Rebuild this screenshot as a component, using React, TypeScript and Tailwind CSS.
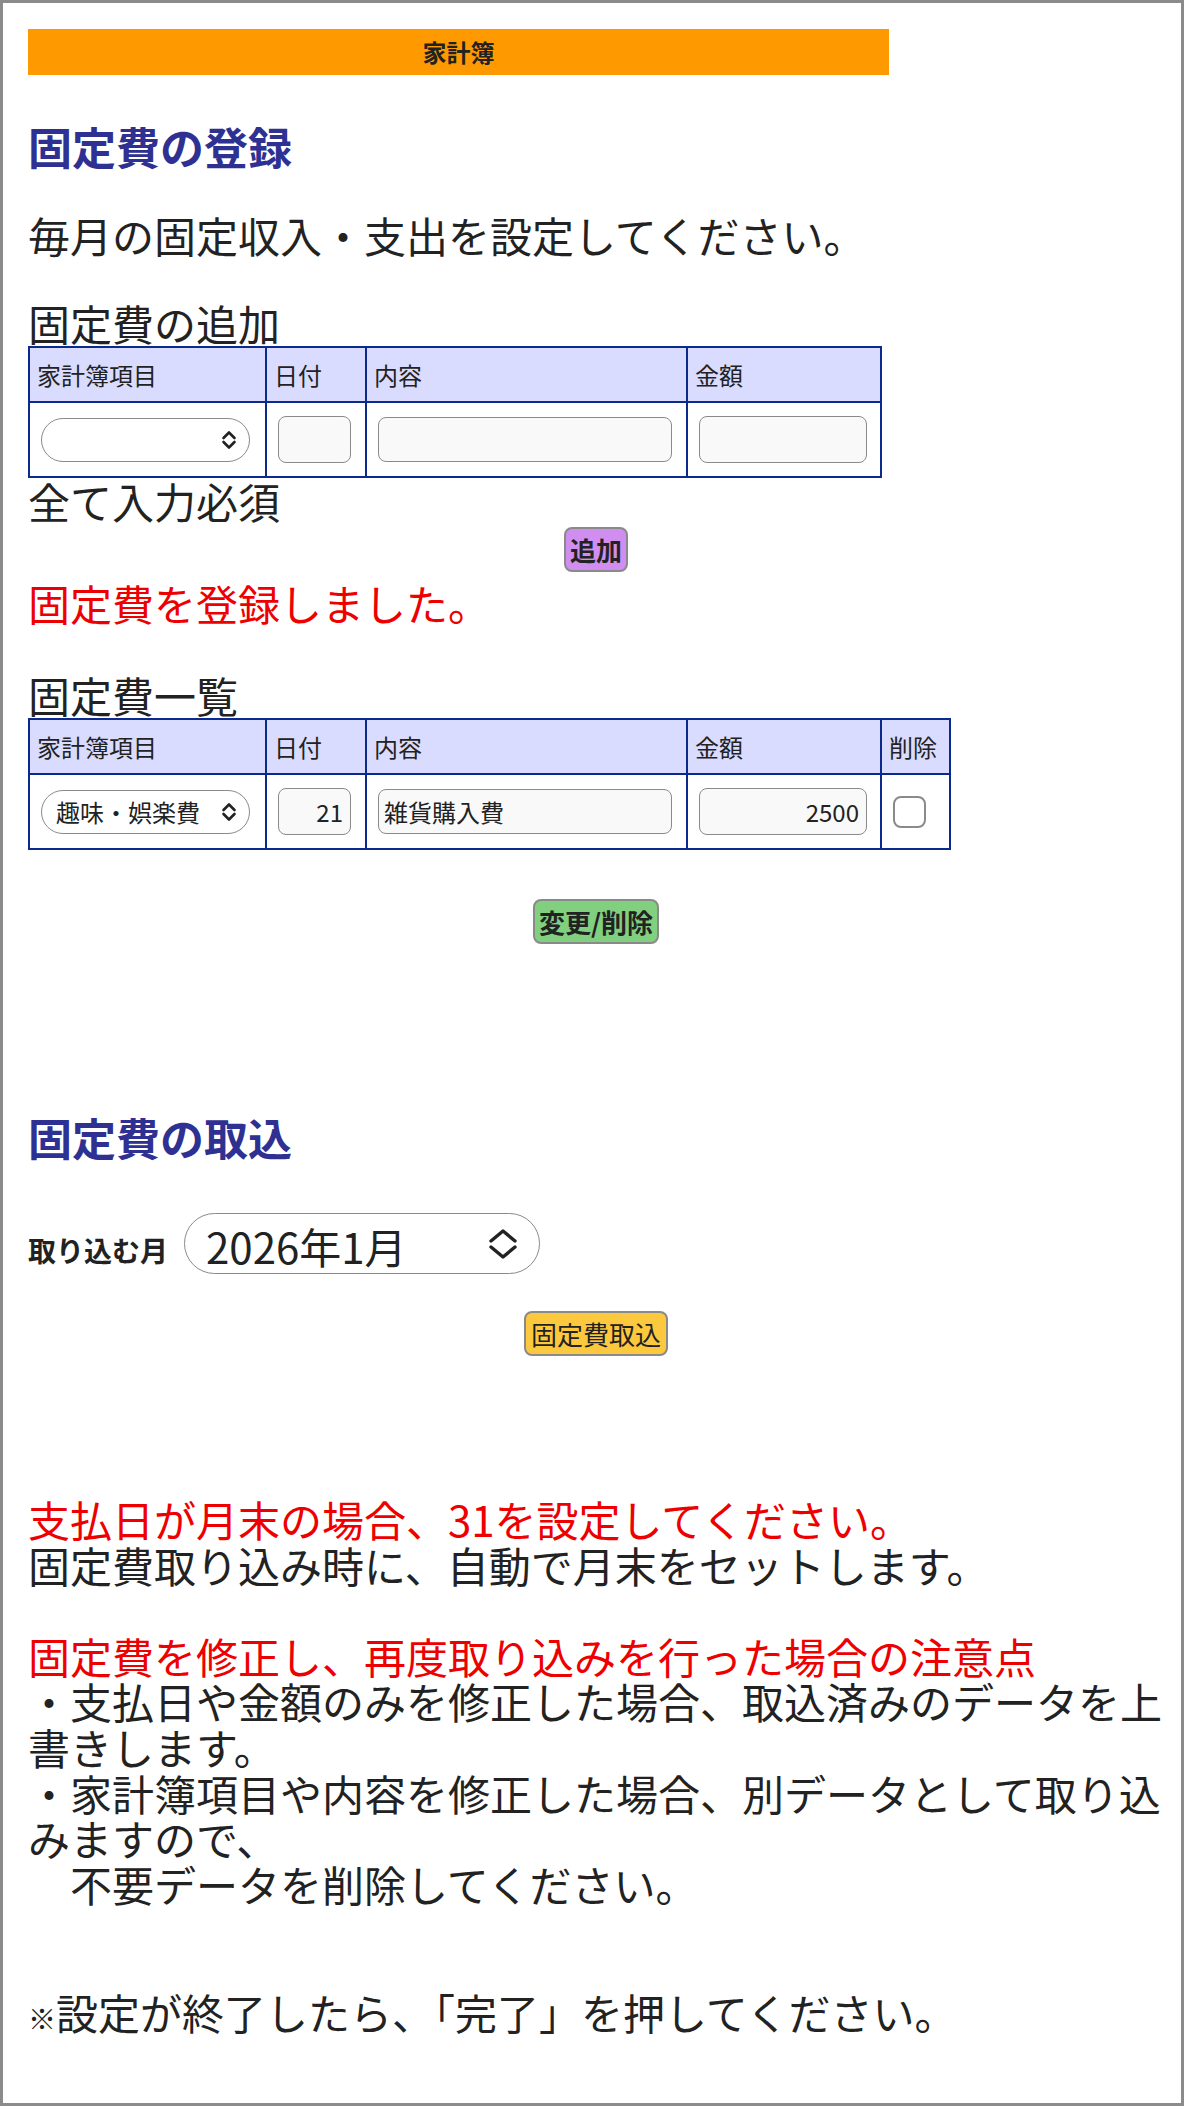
import type { ReactNode } from 'react';

// table cell styles shared by both tables
const th = 'h-[55px] border-2 border-[#0b2a8c] bg-[#d9dcff] px-[7px] text-left align-middle text-[24px] font-normal leading-[28px]';
const td = 'h-[75px] border-2 border-[#0b2a8c] pl-[11px] align-middle';
const field = 'rounded-[8px] border-[1.5px] border-[#8a8a8a] bg-[#f9f9f9] text-[24px] text-[#222] outline-none';

function SmallChevrons() {
  return (
    <svg viewBox="0 0 16 20" className="pointer-events-none absolute top-1/2 right-[13px] h-[20px] w-[16px] -translate-y-1/2" fill="none" stroke="#222" strokeWidth={2.6} strokeLinecap="round" strokeLinejoin="round">
      <path d="M2.5 8 L8 2.5 L13.5 8" />
      <path d="M2.5 12 L8 17.5 L13.5 12" />
    </svg>
  );
}

function BigChevrons() {
  return (
    <svg viewBox="0 0 30 32" className="pointer-events-none absolute top-1/2 right-[22px] h-[32px] w-[30px] -translate-y-1/2" fill="none" stroke="#222" strokeWidth={3.4} strokeLinecap="round" strokeLinejoin="round">
      <path d="M3 13 L15 3 L27 13" />
      <path d="M3 19 L15 29 L27 19" />
    </svg>
  );
}

function CategorySelect({ value }: { value?: string }) {
  return (
    <div className="relative w-[209px]">
      <select
        defaultValue={value ?? ''}
        className="block h-[44px] w-[209px] appearance-none rounded-full border-[1.5px] border-[#8a8a8a] bg-white pl-[14px] text-[24px] text-[#222] outline-none"
      >
        <option value={value ?? ''}>{value ?? ''}</option>
      </select>
      <SmallChevrons />
    </div>
  );
}

function HeaderRow({ withDelete }: { withDelete?: boolean }) {
  return (
    <tr>
      <th className={th}>家計簿項目</th>
      <th className={th}>日付</th>
      <th className={th}>内容</th>
      <th className={th}>金額</th>
      {withDelete && <th className={th}>削除</th>}
    </tr>
  );
}

function Btn({ className, children }: { className: string; children: ReactNode }) {
  return (
    <button className={`h-[45px] rounded-[8px] border-2 border-[#8a8a8a] px-[4px] text-[26px] leading-none text-[#222] ${className}`}>
      {children}
    </button>
  );
}

const line = 'text-[42px] leading-[46px]';

export default function App() {
  return (
    <div className="h-[2106px] border-[3px] border-[#8b8b8b] bg-white pt-[26px] pr-[17px] pl-[25px] font-['Noto_Sans_CJK_JP',sans-serif] text-[#222]">
      <div className="flex h-[46px] w-[861px] items-center justify-center bg-[#ff9900] text-[24px] font-bold">家計簿</div>

      <h2 className="mt-[48px] text-[44px] leading-[46px] font-bold text-[#2e3192]">固定費の登録</h2>
      <p className={`mt-[43px] ${line}`}>毎月の固定収入・支出を設定してください。</p>

      {/* add form */}
      <div className={`mt-[42px] ${line}`}>固定費の追加</div>
      <table className="w-[852px] table-fixed border-collapse">
        <colgroup>
          <col className="w-[237px]" />
          <col className="w-[100px]" />
          <col className="w-[321px]" />
          <col className="w-[194px]" />
        </colgroup>
        <thead>
          <HeaderRow />
        </thead>
        <tbody>
          <tr>
            <td className={td}><CategorySelect /></td>
            <td className={td}><input className={`h-[47px] w-[73px] pr-[7px] text-right ${field}`} /></td>
            <td className={td}><input className={`h-[45px] w-[294px] pl-[5px] ${field}`} /></td>
            <td className={td}><input className={`h-[47px] w-[168px] pr-[7px] text-right ${field}`} /></td>
          </tr>
        </tbody>
      </table>
      <div className={line}>全て入力必須</div>
      <div className="mt-[3px] flex justify-center">
        <Btn className="bg-[#cf8ef0] font-bold">追加</Btn>
      </div>
      <p className={`mt-[8px] text-[#ee0000] ${line}`}>固定費を登録しました。</p>

      {/* registered list */}
      <div className={`mt-[46px] ${line}`}>固定費一覧</div>
      <table className="w-[921px] table-fixed border-collapse">
        <colgroup>
          <col className="w-[237px]" />
          <col className="w-[100px]" />
          <col className="w-[321px]" />
          <col className="w-[194px]" />
          <col className="w-[69px]" />
        </colgroup>
        <thead>
          <HeaderRow withDelete />
        </thead>
        <tbody>
          <tr>
            <td className={td}><CategorySelect value="趣味・娯楽費" /></td>
            <td className={td}><input defaultValue="21" className={`h-[47px] w-[73px] pr-[7px] text-right ${field}`} /></td>
            <td className={td}><input defaultValue="雑貨購入費" className={`h-[45px] w-[294px] pl-[5px] ${field}`} /></td>
            <td className={td}><input defaultValue="2500" className={`h-[47px] w-[168px] pr-[7px] text-right ${field}`} /></td>
            <td className={td}>
              <input type="checkbox" className="block h-[32px] w-[33px] appearance-none rounded-[8px] border-2 border-[#8a8a8a] bg-white" />
            </td>
          </tr>
        </tbody>
      </table>
      <div className="mt-[49px] flex justify-center">
        <Btn className="h-[44px] bg-[#80d080] font-bold">変更/削除</Btn>
      </div>

      {/* import */}
      <h2 className="mt-[170px] text-[44px] leading-[46px] font-bold text-[#2e3192]">固定費の取込</h2>
      <div className="mt-[53px] flex items-center gap-[16px]">
        <label className="mt-[12px] text-[28px] leading-[32px] font-bold">取り込む月</label>
        <div className="relative w-[356px]">
          <select
            defaultValue="2026-01"
            className="block h-[61px] w-[356px] appearance-none rounded-full border-[1.5px] border-[#8a8a8a] bg-white pl-[21px] text-[42px] text-[#222] outline-none"
          >
            <option value="2026-01">2026年1月</option>
          </select>
          <BigChevrons />
        </div>
      </div>
      <div className="mt-[37px] flex justify-center">
        <Btn className="bg-[#fcc93e] px-[5px]">固定費取込</Btn>
      </div>

      <div className="mt-[140px] text-[42px] leading-[45.6px]">
        <span className="text-[#ee0000]">支払日が月末の場合、31を設定してください。</span>
        <br />
        固定費取り込み時に、自動で月末をセットします。
        <br />
        <br />
        <span className="text-[#ee0000]">固定費を修正し、再度取り込みを行った場合の注意点</span>
        <br />
        ・支払日や金額のみを修正した場合、取込済みのデータを上書きします。
        <br />
        ・家計簿項目や内容を修正した場合、別データとして取り込みますので、
        <br />
        {'\u3000'}不要データを削除してください。
      </div>

      <p className={`mt-[83px] ${line}`}>
        <span className="text-[28px] font-bold">※</span>設定が終了したら、「完了」を押してください。
      </p>
    </div>
  );
}
